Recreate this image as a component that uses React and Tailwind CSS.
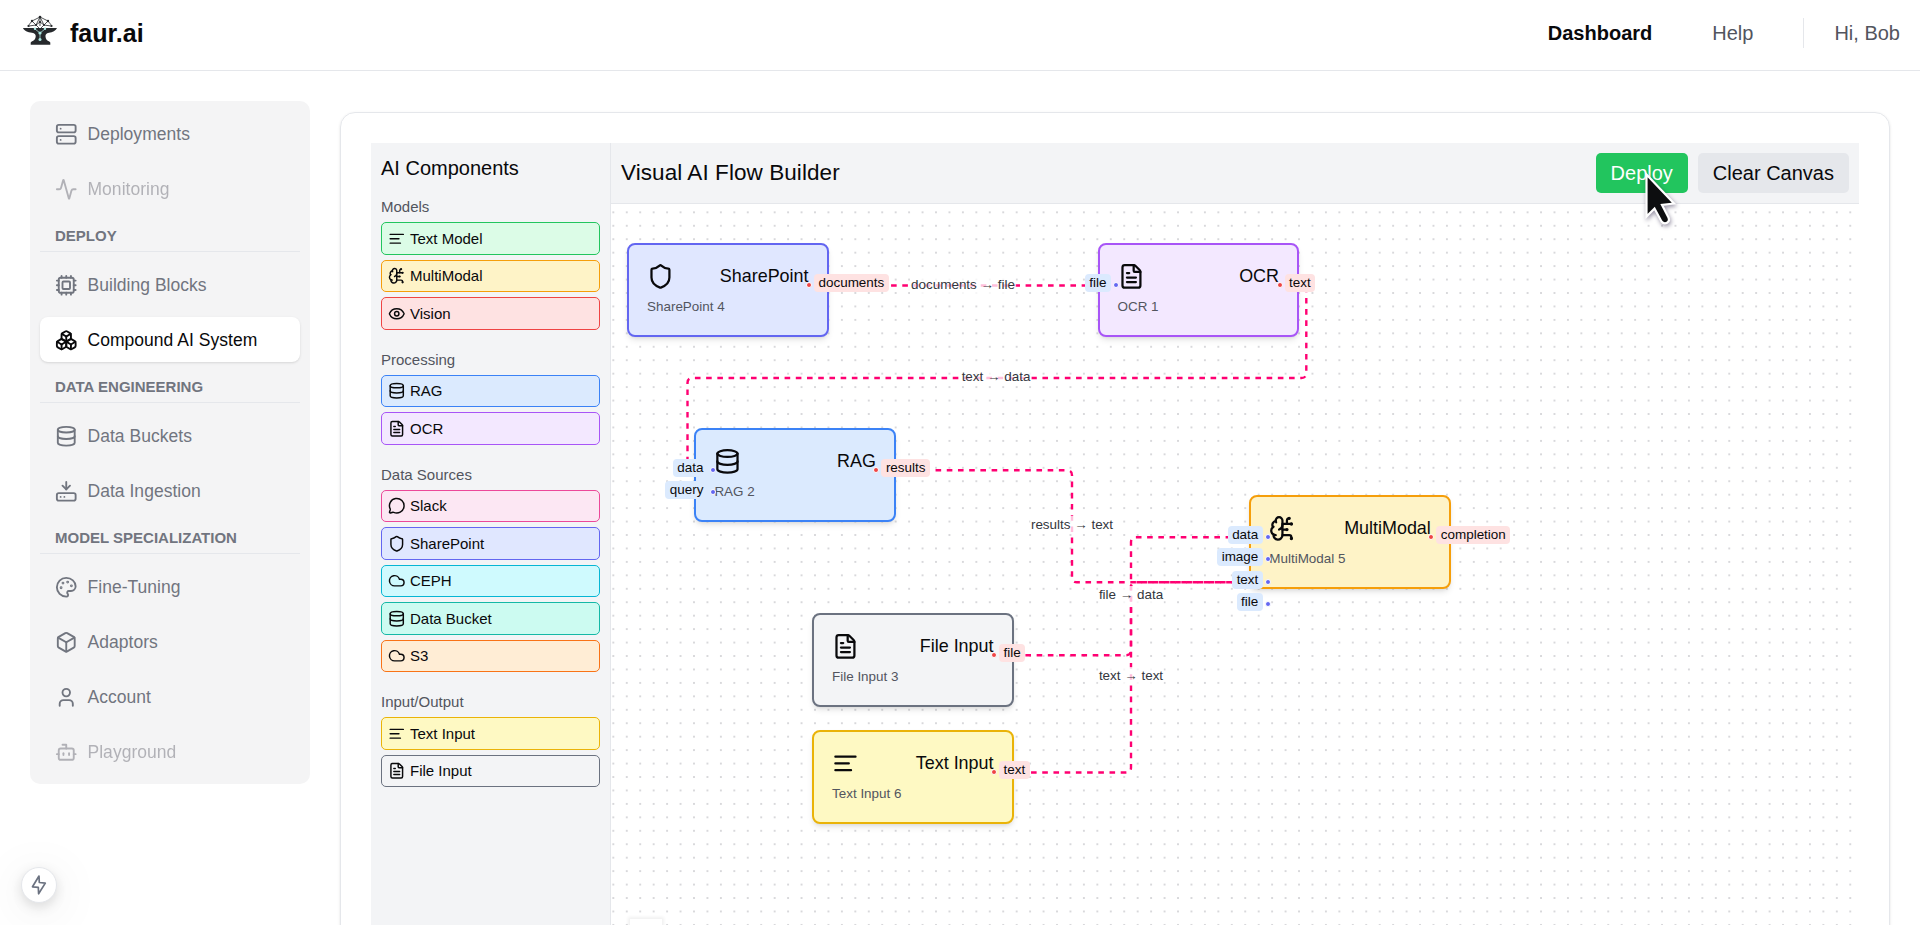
import React from "react";
import {
  Activity, Bot, Box, Boxes, Cloud, Cpu, Database, Eye, FileText,
  HardDriveDownload, MessageCircle, Palette, Server, Shield, User,
} from "lucide-react";

const TextLines = ({ size = 24, className, strokeWidth = 2 }) => (
  <svg width={size} height={size} viewBox="0 0 24 24" fill="none" stroke="currentColor" strokeWidth={strokeWidth} strokeLinecap="round" className={className}>
    <path d="M3 6h18M3 12h12M3 18h14" />
  </svg>
);

const BrainHalf = ({ size = 24, className, strokeWidth = 2 }) => (
  <svg width={size} height={size} viewBox="0 0 24 24" fill="none" stroke="currentColor" strokeWidth={strokeWidth} strokeLinecap="round" strokeLinejoin="round" className={className}>
    <path d="M12 5a3 3 0 1 0-5.997.125 4 4 0 0 0-2.526 5.77 4 4 0 0 0 .556 6.588A4 4 0 1 0 12 18Z" />
    <path d="M9 13a4.5 4.5 0 0 0 3-4" />
    <path d="M6.003 5.125A3 3 0 0 0 6.401 6.5" />
    <path d="M3.477 10.896a4 4 0 0 1 .585-.396" />
    <path d="M6 18a4 4 0 0 1-1.967-.516" />
    <path d="M12 13h4" />
    <path d="M12 18h6a2 2 0 0 1 2 2v1" />
    <path d="M12 8h8" />
    <path d="M16 8V5a2 2 0 0 1 2-2" />
    <circle cx="16" cy="13" r=".5" />
    <circle cx="18" cy="3" r=".5" />
    <circle cx="20" cy="21" r=".5" />
    <circle cx="20" cy="8" r=".5" />
  </svg>
);

const Logo = () => (
  <svg width="36" height="32" viewBox="0 0 36 32" fill="none">
    <path d="M1 13h34c-1 2.600-4.500 4.200-8 4.800-3 .5-3.700 2-3.500 4 .2 2.400 1.500 3.800 3.800 4.700l1 .9v2.400H8.700v-2.400l1-.9c2.300-.9 3.800-2.300 4-4.700.2-2-.7-3.500-3.700-4C5.500 17.200 2 15.600 1 13z" fill="#26292c" />
    <path d="M6 11 10 6l8-4 8 4 4 5M10 6l4 4 4-8 4 8 4-4M18 2v9M7 11l7-1 4-3 4 3 7 1M14 10l4 4 4-4" stroke="#26292c" strokeWidth=".8" />
    <g fill="#26292c">
      <circle cx="18" cy="2" r="1.300" /><circle cx="10" cy="6" r="1.200" /><circle cx="26" cy="6" r="1.200" />
      <circle cx="6.500" cy="11" r="1.100" /><circle cx="29.500" cy="11" r="1.100" /><circle cx="18" cy="7" r="1.100" />
      <circle cx="14" cy="10" r="1" /><circle cx="22" cy="10" r="1" />
    </g>
    <path d="M13 14l5 4 5-4M18 18v6" stroke="#a9ddd8" strokeWidth=".8" />
    <g fill="#a9e6e0">
      <circle cx="18" cy="18" r="1.600" /><circle cx="18" cy="24.500" r="1.500" />
      <circle cx="13" cy="13.800" r="1.200" /><circle cx="23" cy="13.800" r="1.200" />
    </g>
  </svg>
);

const menu = [
  { label: "Deployments", icon: Server },
  { label: "Monitoring", icon: Activity, state: "off" },
  { heading: "DEPLOY" },
  { label: "Building Blocks", icon: Cpu },
  { label: "Compound AI System", icon: Boxes, state: "on" },
  { heading: "DATA ENGINEERING" },
  { label: "Data Buckets", icon: Database },
  { label: "Data Ingestion", icon: HardDriveDownload },
  { heading: "MODEL SPECIALIZATION" },
  { label: "Fine-Tuning", icon: Palette },
  { label: "Adaptors", icon: Box },
  { label: "Account", icon: User },
  { label: "Playground", icon: Bot, state: "off" },
];

const itemState = {
  on: "bg-white text-[#09090b] shadow-sm",
  off: "text-[#71717a] opacity-50",
};

function Sidebar() {
  return (
    <nav className="flex w-[280px] shrink-0 flex-col gap-[10px] self-start rounded-[10px] bg-[#f4f4f5] p-[10px]">
      {menu.map(({ label, heading, icon: Icon, state }) =>
        heading ? (
          <div key={heading} className="h-[31px] border-b border-gray-200 px-[15px] pt-[5px] text-[15px] leading-5 font-bold text-[#71757f]">
            {heading}
          </div>
        ) : (
          <div key={label} className={`flex h-[45px] items-center gap-[10px] rounded-[8px] px-[15px] pt-[2px] text-[17.5px] tracking-[0.03px] ${itemState[state] || "text-[#71757f]"}`}>
            <Icon size={22.500} />
            {label}
          </div>
        )
      )}
    </nav>
  );
}

const palette = [
  { title: "Models", items: [
    ["Text Model", TextLines, "border-[#22c55e] bg-[#dcfce7]"],
    ["MultiModal", BrainHalf, "border-[#f59e0b] bg-[#fef3c7]"],
    ["Vision", Eye, "border-[#ef4444] bg-[#fee2e2]"],
  ] },
  { title: "Processing", items: [
    ["RAG", Database, "border-[#3b82f6] bg-[#dbeafe]"],
    ["OCR", FileText, "border-[#a855f7] bg-[#f3e8ff]"],
  ] },
  { title: "Data Sources", items: [
    ["Slack", MessageCircle, "border-[#ec4899] bg-[#fce7f3]"],
    ["SharePoint", Shield, "border-[#6366f1] bg-[#e0e7ff]"],
    ["CEPH", Cloud, "border-[#06b6d4] bg-[#cffafe]"],
    ["Data Bucket", Database, "border-[#14b8a6] bg-[#ccfbf1]"],
    ["S3", Cloud, "border-[#f97316] bg-[#ffedd5]"],
  ] },
  { title: "Input/Output", items: [
    ["Text Input", TextLines, "border-[#eab308] bg-[#fef9c3]"],
    ["File Input", FileText, "border-[#6b7280] bg-[#f3f4f6]"],
  ] },
];

function Palettes() {
  return (
    <aside className="w-[240px] shrink-0 border-r border-gray-200 bg-[#f3f4f6] p-[10px]">
      <h2 className="mb-[14.4px] text-[20px] leading-[30px]">AI Components</h2>
      {palette.map((group) => (
        <section key={group.title} className="mb-[20px]">
          <h3 className="mb-[5px] text-[15px] leading-5 text-[#52555e]">{group.title}</h3>
          <div className="flex flex-col gap-[5px]">
            {group.items.map(([label, Icon, color]) => (
              <div key={label} className={`flex h-[32.5px] items-center gap-[5px] rounded-[5px] border px-[5.5px] text-[15px] leading-5 ${color}`}>
                <Icon size={17.500} />
                {label}
              </div>
            ))}
          </div>
        </section>
      ))}
    </aside>
  );
}

const nodes = [
  { x: 16, y: 39, title: "SharePoint", sub: "SharePoint 4", icon: Shield, color: "border-[#6366f1] bg-[#e0e7ff]", out: "documents" },
  { x: 486.5, y: 39, title: "OCR", sub: "OCR 1", icon: FileText, color: "border-[#a855f7] bg-[#f3e8ff]", ins: ["file"], out: "text" },
  { x: 83.4, y: 223.8, title: "RAG", sub: "RAG 2", icon: Database, color: "border-[#3b82f6] bg-[#dbeafe]", ins: ["data", "query"], out: "results" },
  { x: 201, y: 408.8, title: "File Input", sub: "File Input 3", icon: FileText, color: "border-[#6b7280] bg-[#f3f4f6]", out: "file" },
  { x: 638.3, y: 291, title: "MultiModal", sub: "MultiModal 5", icon: BrainHalf, color: "border-[#f59e0b] bg-[#fef3c7]", ins: ["data", "image", "text", "file"], out: "completion" },
  { x: 201, y: 526, title: "Text Input", sub: "Text Input 6", icon: TextLines, color: "border-[#eab308] bg-[#fef9c3]", out: "text" },
];

function FlowNode({ x, y, title, sub, icon: Icon, color, ins = [], out }) {
  return (
    <div style={{ left: x, top: y }} className="absolute">
      <div className={`h-[94px] w-[201.5px] rounded-[8px] border-2 px-[18px] pt-[18px] shadow-md ${color}`}>
        <div className="flex items-center justify-between text-[17.93px] leading-[27px]">
          <Icon size={26.900} />
          {title}
        </div>
        <div className="mt-[8px] text-[13.45px] leading-[18px] text-[#52555e]">{sub}</div>
      </div>
      {ins.map((name, i) => (
        <div key={name} style={{ top: 31 + i * 22.400 }} className="absolute right-[180px] flex items-center gap-[2px]">
          <span className="h-[18px] rounded-[4px] bg-[#dbeafe] px-[4.5px] text-[13.45px] leading-[18px]">{name}</span>
          <span className="mt-[4px] size-[6px] rounded-full border border-white bg-[#6366f1]" />
        </div>
      ))}
      <div className="absolute top-[31px] left-[179px] flex items-center gap-[2px]">
        <span className="mt-[4px] size-[6px] rounded-full border border-white bg-[#ef4444]" />
        <span className="h-[18px] rounded-[4px] bg-[#fee2e2] px-[4.5px] text-[13.45px] leading-[18px]">{out}</span>
      </div>
    </div>
  );
}

const edges = [
  { d: "M201.600 81.500H503", label: "documents → file", x: 352, y: 80.5 },
  { d: "M672 81.500H690.500Q695.300 81.500 695.300 86.500V169Q695.300 174 690.300 174H81.500Q76.500 174 76.500 179V261.200Q76.500 266.200 81.500 266.200H99", label: "text → data", x: 385, y: 173 },
  { d: "M268.500 266.200H456Q461 266.200 461 271.200V373.300Q461 378.300 466 378.300H655", label: "results → text", x: 461, y: 321 },
  { d: "M386.400 451.200H515Q520 451.200 520 446.200V338.300Q520 333.300 525 333.300H655", label: "file → data", x: 520, y: 391, offset: -5.6 },
  { d: "M386.400 568.500H515Q520 568.500 520 563.500V383.300Q520 378.300 525 378.300H655", label: "text → text", x: 520, y: 472 },
];

function Canvas() {
  return (
    <div className="relative flex-1 overflow-hidden bg-white">
      <svg className="absolute inset-0 size-full">
        <defs>
          <pattern id="dots" x="-4.400" y="1.600" width="13.445" height="13.445" patternUnits="userSpaceOnUse">
            <circle cx="6.720" cy="6.720" r="0.65" fill="#91919a" />
          </pattern>
        </defs>
        <rect width="100%" height="100%" fill="url(#dots)" />
        {edges.map((e) => (
          <path key={e.d} d={e.d} fill="none" stroke="#ff0072" strokeWidth="2.400" strokeDasharray="5.605" strokeDashoffset={e.offset || 0} />
        ))}
      </svg>
      {nodes.map((n) => <FlowNode key={n.sub} {...n} />)}
      {edges.map((e) => (
        <div key={e.d} style={{ left: e.x, top: e.y }} className="absolute h-[18px] -translate-x-1/2 -translate-y-1/2 bg-white/75 px-px text-[13.45px] leading-[18px] whitespace-nowrap text-[#33363d]">
          {e.label}
        </div>
      ))}
      <div className="absolute top-[714.5px] left-[19px] h-[130px] w-[32px] bg-white shadow-[0_0_3px_2px_rgba(0,0,0,0.06)]" />
    </div>
  );
}

const Pointer = () => (
  <svg width="40" height="64" viewBox="0 0 40 64" className="absolute top-[170px] left-[1641px] drop-shadow-[1px_2px_2px_rgba(30,20,60,0.45)]">
    <path d="M5.500 4.500V46.500L13.500 38.500L20.500 51.500Q23 54.500 26.500 52.500Q29 50.500 27.500 47.500L21 35L33 33.500Z" fill="#0d0e10" stroke="#fff" strokeWidth="2.200" strokeLinejoin="miter" />
  </svg>
);

export default function App() {
  return (
    <div className="relative flex h-screen w-full flex-col overflow-hidden bg-white font-['Liberation_Sans',Arial,sans-serif] text-[#09090b]">
      <header className="flex h-[71px] shrink-0 items-start justify-between border-b border-gray-200 pr-5 pl-[22px]">
        <div className="flex items-start gap-[12px] pt-[15px]">
          <Logo />
          <span className="text-[25px] leading-[36px] font-bold">faur.ai</span>
        </div>
        <div className="flex h-[66px] items-center text-[20px] text-[#52555e]">
          <span className="font-bold text-[#09090b]">Dashboard</span>
          <span className="ml-[60px]">Help</span>
          <span className="mr-[30px] ml-[50px] h-[30px] w-px bg-gray-200" />
          <span>Hi, Bob</span>
        </div>
      </header>
      <main className="flex min-h-0 flex-1 gap-[30px] pt-[30px] pr-[30px] pl-[30px]">
        <Sidebar />
        <div className="mt-[11px] -mb-[40px] flex flex-1 rounded-[15px] border border-gray-200 p-[30px] shadow-sm">
          <Palettes />
          <div className="flex flex-1 flex-col">
            <div className="flex h-[61px] shrink-0 items-center justify-between border-b border-gray-200 bg-[#f3f4f6] px-[10px]">
              <h1 className="text-[22.5px] tracking-[0.07px]">Visual AI Flow Builder</h1>
              <div className="flex gap-[10px] text-[20px] leading-[30px]">
                <button className="rounded-[5px] bg-[#22c55e] px-[15px] py-[5px] text-white">Deploy</button>
                <button className="rounded-[5px] bg-gray-200 px-[15px] py-[5px]">Clear Canvas</button>
              </div>
            </div>
            <Canvas />
          </div>
        </div>
      </main>
      <button className="absolute top-[867px] left-[21px] flex size-[36px] items-center justify-center rounded-full border border-gray-200 bg-white text-[#6b7280] shadow-[0_4px_12px_rgba(0,0,0,0.12),0_8px_50px_rgba(0,0,0,0.1)]">
        <svg width="20" height="24" viewBox="0 0 20 24" fill="none" stroke="currentColor" strokeWidth="1.700" strokeLinejoin="round">
          <path d="M10 3 3.500 13.800 9.300 14.300 9.600 20.800 16.300 10.100 10.300 9.500Z" />
        </svg>
      </button>
      <Pointer />
    </div>
  );
}
